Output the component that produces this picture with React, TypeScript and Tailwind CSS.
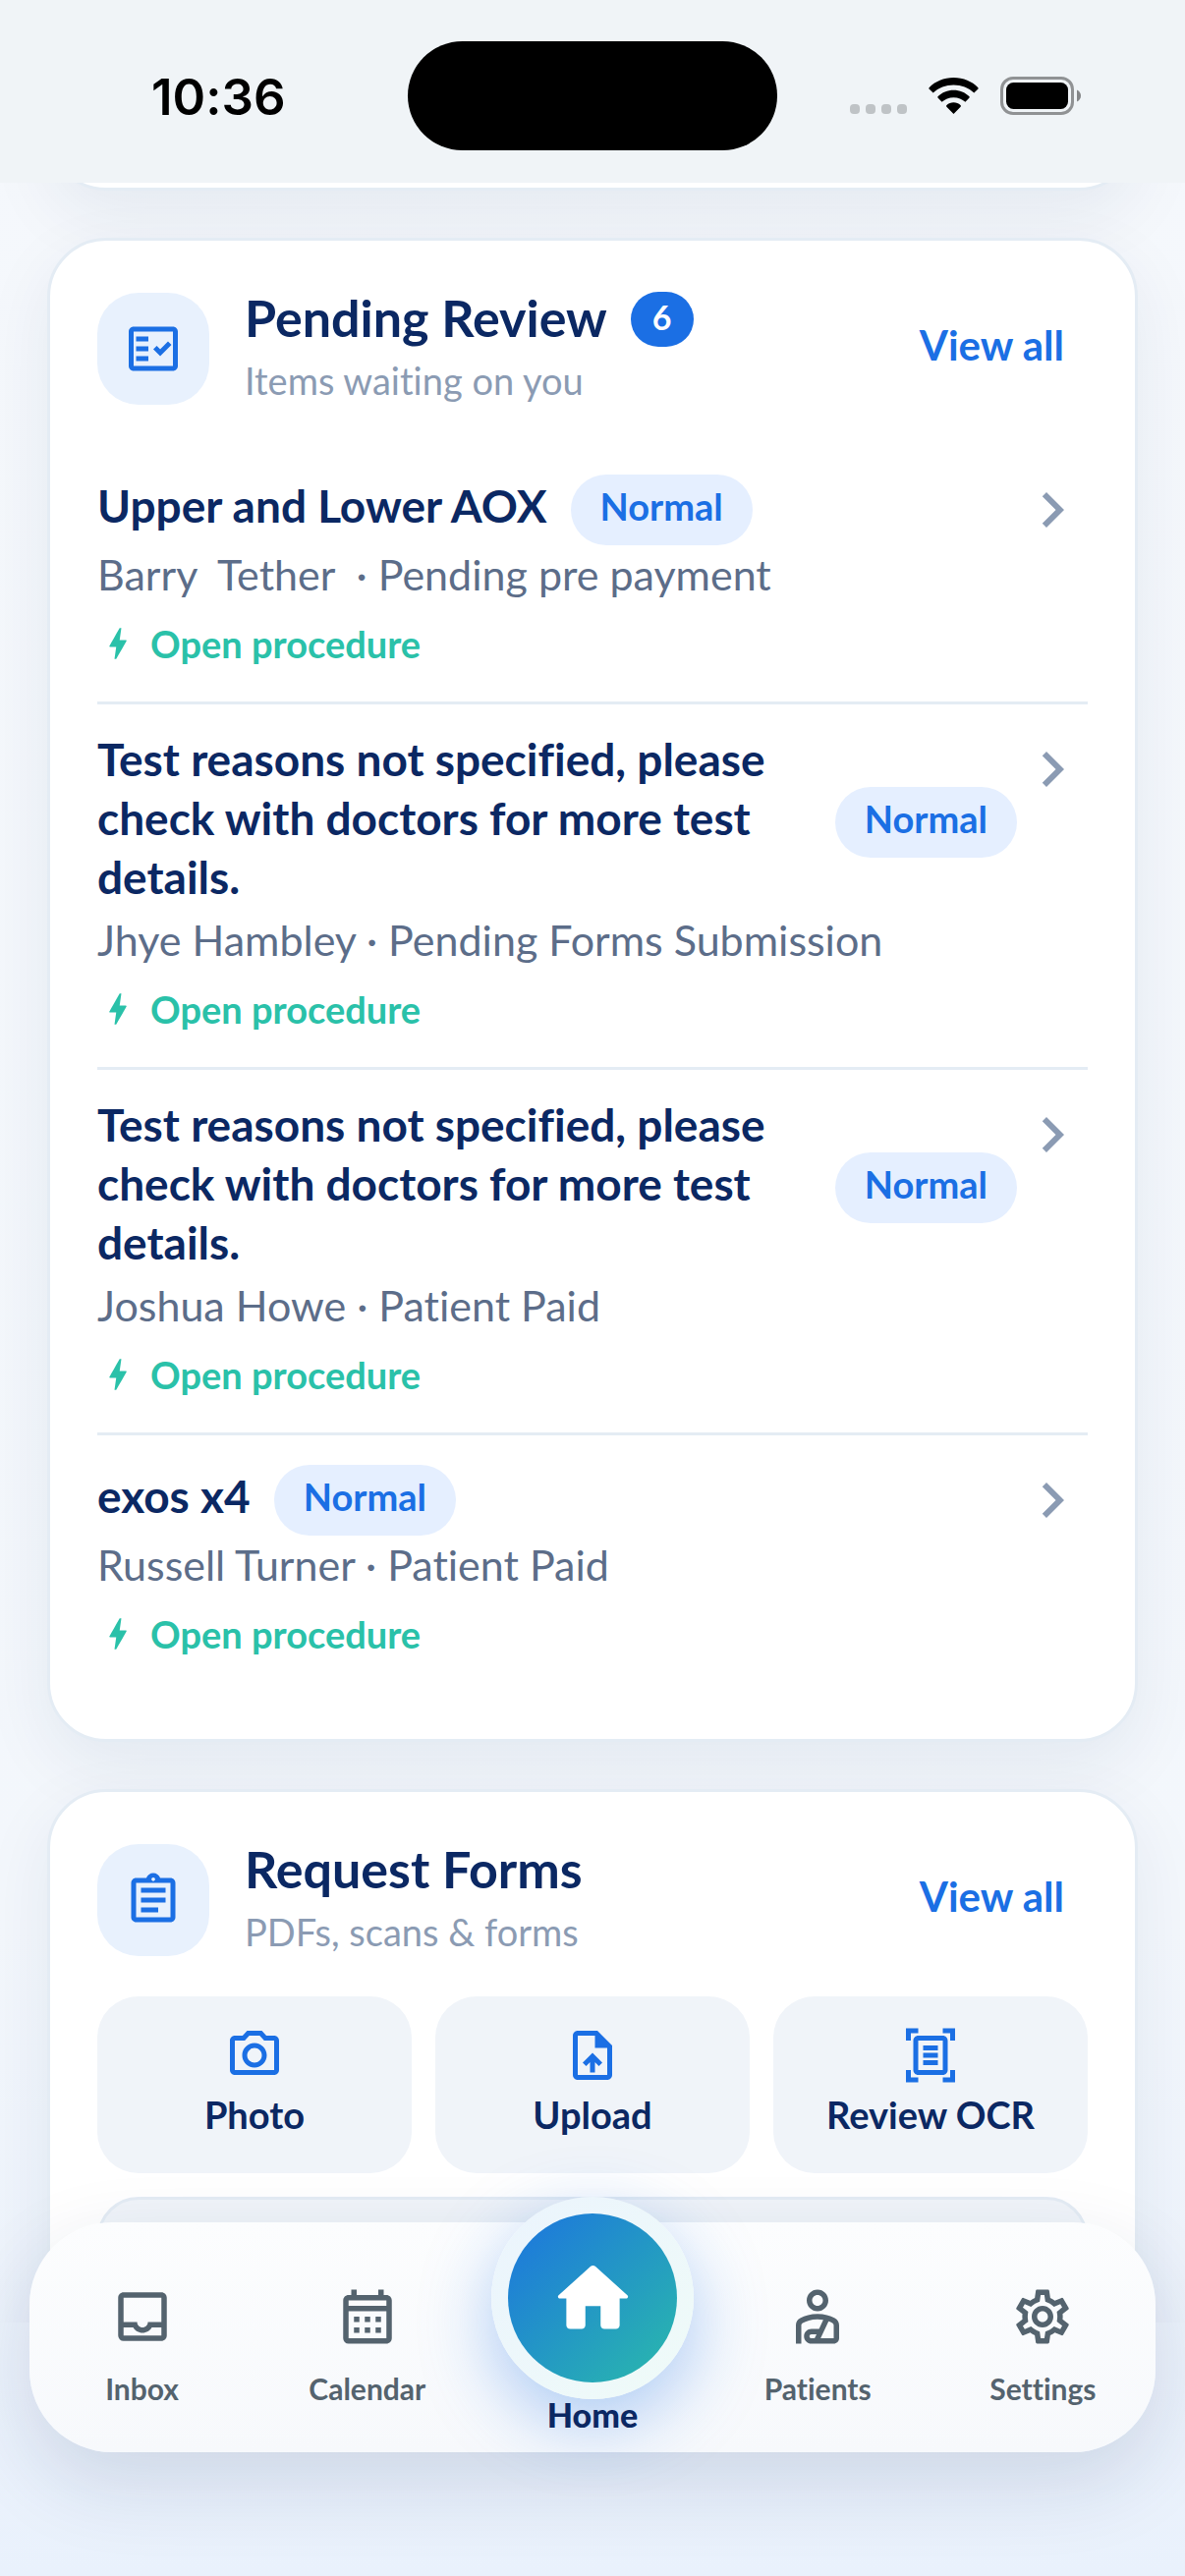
import React from 'react';
import {
  MdBolt,
  MdChevronRight,
  MdOutlineAssignment,
  MdOutlineCalendarMonth,
  MdOutlineDocumentScanner,
  MdOutlineFactCheck,
  MdOutlineInbox,
  MdOutlinePersonalInjury,
  MdOutlinePhotoCamera,
  MdOutlineSettings,
  MdOutlineUploadFile,
} from 'react-icons/md';
import { IconType } from 'react-icons';

interface ReviewItem {
  id: number;
  title: string;
  detail: string;
  priority: string;
}

const reviewItems: ReviewItem[] = [
  { id: 1, title: 'Upper and Lower AOX', detail: 'Barry  Tether  · Pending pre payment', priority: 'Normal' },
  {
    id: 2,
    title: 'Test reasons not specified, please check with doctors for more test details.',
    detail: 'Jhye Hambley · Pending Forms Submission',
    priority: 'Normal',
  },
  {
    id: 3,
    title: 'Test reasons not specified, please check with doctors for more test details.',
    detail: 'Joshua Howe · Patient Paid',
    priority: 'Normal',
  },
  { id: 4, title: 'exos x4', detail: 'Russell Turner · Patient Paid', priority: 'Normal' },
];

const formActions: Array<{ label: string; icon: IconType }> = [
  { label: 'Photo', icon: MdOutlinePhotoCamera },
  { label: 'Upload', icon: MdOutlineUploadFile },
  { label: 'Review OCR', icon: MdOutlineDocumentScanner },
];

const StatusBar: React.FC = () => (
  <div className="relative z-10 grid h-[186px] shrink-0 grid-cols-3 items-center bg-[#f0f4f7]">
    <span className="pl-[154px] pt-3 font-['Inter',sans-serif] text-[51px] leading-[60px] font-semibold text-black">10:36</span>
    <div className="mt-2 h-[111px] w-[376px] justify-self-center rounded-full bg-black" />
    <div className="mt-2 flex items-center justify-end gap-[22px] pr-[106px]">
      <div className="mt-7 flex gap-[6px]">
        <i className="size-[10px] rounded-[4px] bg-[#bfc3c6]" />
        <i className="size-[10px] rounded-[4px] bg-[#bfc3c6]" />
        <i className="size-[10px] rounded-[4px] bg-[#bfc3c6]" />
        <i className="size-[10px] rounded-[4px] bg-[#bfc3c6]" />
      </div>
      <svg width="51" height="37" viewBox="0 0 51 37">
        <path d="M25.5 0C35.4 0 44.4 3.9 50.2 9.9c.6.6.6 1.300 0 1.900L46.300 15.500C40.800 10.300 33.500 7.500 25.500 7.500S10.200 10.300 4.700 15.500L.8 11.800c-.6-.6-.6-1.300 0-1.900C6.600 3.900 15.600 0 25.500 0z" />
        <path d="M25.500 12.700c6.200 0 11.800 2.400 15.800 6.300.6.6.6 1.200 0 1.800l-3.900 4c-3.100-2.900-7.200-4.600-11.900-4.600s-8.800 1.700-11.900 4.600l-3.900-4c-.6-.6-.6-1.200 0-1.800 4-3.900 9.600-6.300 15.800-6.300z" />
        <path d="M25.500 25.300c2.700 0 5.200 1 7 2.600.6.5.6 1.200.1 1.800L25.500 37l-7.100-7.300c-.5-.6-.5-1.300.1-1.800 1.800-1.600 4.300-2.600 7-2.600z" />
      </svg>
      <svg width="82" height="39" viewBox="0 0 82 39">
        <rect x="1.5" y="1.5" width="72" height="36" rx="11.5" fill="none" stroke="#000" strokeOpacity="0.4" strokeWidth="3" />
        <rect x="6" y="6" width="63" height="27" rx="7.5" />
        <path d="M78 13.5c2.500 1 4 3.400 4 6s-1.500 5-4 6z" fillOpacity="0.45" />
      </svg>
    </div>
  </div>
);

const Card: React.FC<{ children?: React.ReactNode }> = ({ children }) => (
  <section className="rounded-[60px] border-[3px] border-[#e4ecf4] bg-white p-12 shadow-[0_24px_72px_rgba(20,40,90,0.07)]">
    {children}
  </section>
);

interface CardHeaderProps {
  icon: IconType;
  title: string;
  subtitle: string;
  count?: number;
}

const CardHeader: React.FC<CardHeaderProps> = ({ icon: Icon, title, subtitle, count }) => (
  <header className="mb-9 flex items-center">
    <div className="flex size-[114px] items-center justify-center rounded-[42px] bg-[#e8f1fd] text-[#1b6fe4]">
      <Icon size={60} />
    </div>
    <div className="ml-9 flex-1">
      <div className="flex items-center gap-6">
        <h2 className="text-[52px] leading-[60px] font-bold text-[#0b2863]">{title}</h2>
        {count !== undefined && (
          <span className="mt-1 rounded-full bg-[#1b6fe4] px-[22px] pb-1 text-[34px] leading-[52px] font-bold text-white">
            {count}
          </span>
        )}
      </div>
      <p className="mt-1 text-[38px] leading-[60px] text-[#8b9bb3]">{subtitle}</p>
    </div>
    <button className="px-6 pb-2 text-[42px] leading-[60px] font-bold text-[#1b6fe4]">View all</button>
  </header>
);

const ReviewRow: React.FC<{ item: ReviewItem }> = ({ item }) => (
  <li className="flex items-start border-b-[3px] border-[#e4ecf4] pt-[30px] pb-[35px] last:border-b-0">
    <div className="min-w-0 flex-1">
      <div className="flex items-center gap-6">
        <h3 className="-mt-1 mb-1 text-[46px] leading-[60px] font-bold text-[#0b2863]">{item.title}</h3>
        <span className="shrink-0 rounded-full bg-[#e5efff] px-[30px] pb-2 text-[38px] leading-[64px] font-bold text-[#1b6fe4]">
          {item.priority}
        </span>
      </div>
      <p className="text-[43px] leading-[60px] whitespace-pre text-[#5c6d89]">{item.detail}</p>
      <button className="mt-4 flex items-center gap-3 text-[38px] leading-[48px] font-bold text-[#2ac1a9]">
        <MdBolt size={42} />
        Open procedure
      </button>
    </div>
    <MdChevronRight size={72} className="text-[#8b9bb3]" />
  </li>
);

const navIdle = 'flex flex-1 flex-col items-center gap-[22px] pt-[63px] text-[30px] leading-9 font-bold text-[#54636e]';

const BottomNav: React.FC = () => (
  <nav className="relative mx-[30px] -mt-[102px] flex h-[234px] rounded-[84px] bg-linear-to-b from-[#fcfdfe] to-[#f7f9fc] shadow-[0_30px_84px_rgba(20,40,90,0.14)]">
    <button className={navIdle}>
      <MdOutlineInbox size={66} />
      Inbox
    </button>
    <button className={navIdle}>
      <MdOutlineCalendarMonth size={66} />
      Calendar
    </button>
    <button className="flex flex-1 flex-col items-center text-[34px] leading-8 font-black text-[#0b2863]">
      <span className="-mt-[26px] rounded-full bg-linear-to-br/srgb from-[#ebf4fd] to-[#effbf8] p-[17px] shadow-[0_24px_72px_rgba(27,111,228,0.34)]">
        <span className="flex size-[172px] items-center justify-center rounded-full bg-linear-to-br/srgb from-[#1c74df] to-[#2abaab] text-white">
          <svg width="93" height="93" viewBox="0 0 24 24" fill="currentColor">
            <path d="M10 19v-5h4v5c0 .55.45 1 1 1h3c.55 0 1-.45 1-1v-7h1.7c.46 0 .68-.57.33-.87L12.67 3.6c-.38-.34-.96-.34-1.34 0l-8.36 7.53c-.34.3-.13.87.33.87H5v7c0 .55.45 1 1 1h3c.55 0 1-.45 1-1z" />
          </svg>
        </span>
      </span>
      Home
    </button>
    <button className={navIdle}>
      <MdOutlinePersonalInjury size={66} />
      Patients
    </button>
    <button className={navIdle}>
      <MdOutlineSettings size={66} />
      Settings
    </button>
  </nav>
);

const App: React.FC = () => {
  return (
    <div className="flex h-screen flex-col overflow-hidden bg-linear-to-b from-[#f5f8fc] via-[#f3f7fc] via-75% to-[#e9f1fc] font-['Lato',sans-serif] [font-variant-ligatures:none]">
      <StatusBar />

      <main className="flex min-h-0 flex-1 flex-col justify-start gap-12 overflow-hidden px-12">
        {/* Tail of the previous card, scrolled under the status bar */}
        <div className="-mt-[112px] shrink-0">
          <section className="h-[120px] rounded-[60px] border-[3px] border-[#e4ecf4] bg-white shadow-[0_24px_72px_rgba(20,40,90,0.07)]" />
        </div>

        <Card>
          <CardHeader icon={MdOutlineFactCheck} title="Pending Review" subtitle="Items waiting on you" count={6} />
          <ul>
            {reviewItems.map((item) => (
              <ReviewRow key={item.id} item={item} />
            ))}
          </ul>
        </Card>

        <Card>
          <CardHeader icon={MdOutlineAssignment} title="Request Forms" subtitle="PDFs, scans & forms" />
          <div className="grid grid-cols-3 gap-6">
            {formActions.map(({ label, icon: Icon }) => (
              <button
                key={label}
                className="flex flex-col items-center gap-[6px] rounded-[42px] bg-[#f0f4f9] pt-[30px] pb-9 text-[38px] leading-[48px] font-bold text-[#0b2863]"
              >
                <Icon size={60} className="text-[#1b6fe4]" />
                {label}
              </button>
            ))}
          </div>
          <div className="mt-6 h-[240px] rounded-[42px] border-[3px] border-[#e4ecf4] bg-[#f0f4f9]" />
        </Card>
      </main>

      <footer className="shrink-0 pb-[126px]">
        <BottomNav />
      </footer>
    </div>
  );
};

export default App;
